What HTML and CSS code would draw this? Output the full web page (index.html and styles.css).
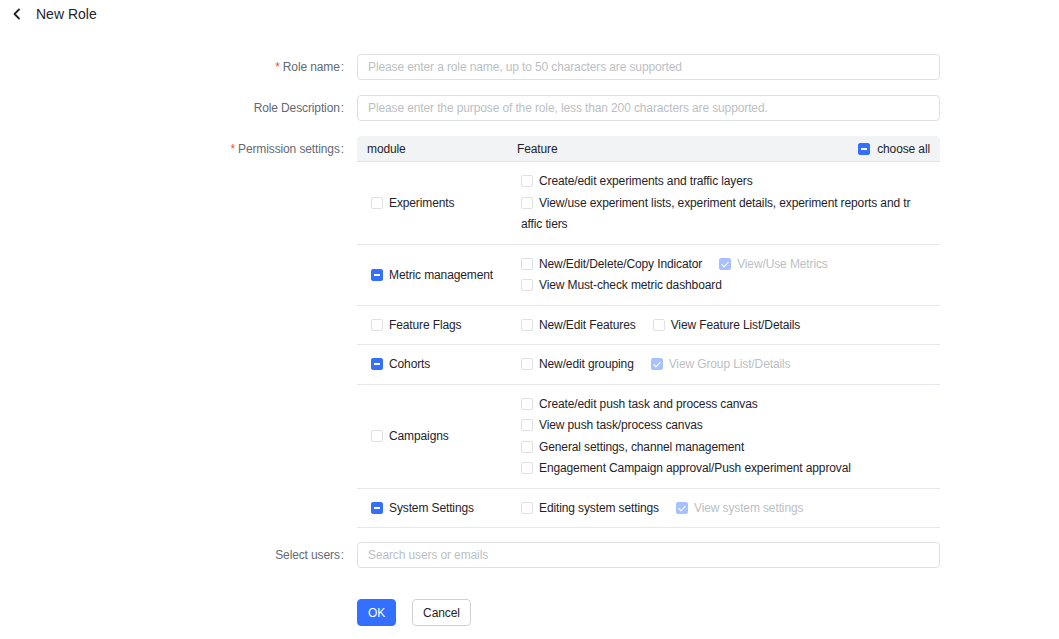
FILE: index.html
```html
<!DOCTYPE html>
<html lang="en">
<head>
<meta charset="utf-8">
<title>New Role</title>
<link rel="stylesheet" href="styles.css">
</head>
<body>
<div class="page">
  <div class="topbar">
    <svg class="back" width="10" height="12" viewBox="0 0 10 12"><polyline points="7,1.5 2.5,6 7,10.5" fill="none" stroke="#1f2329" stroke-width="1.8" stroke-linecap="round" stroke-linejoin="round"/></svg>
    <span class="title">New Role</span>
  </div>

  <div class="form">
    <div class="label"><span class="req">*</span>Role name<span class="colon">:</span></div>
    <div class="input"><span class="ph">Please enter a role name, up to 50 characters are supported</span></div>

    <div class="label">Role Description<span class="colon">:</span></div>
    <div class="input"><span class="ph">Please enter the purpose of the role, less than 200 characters are supported.</span></div>

    <div class="label"><span class="req">*</span>Permission settings<span class="colon">:</span></div>
    <div class="table">
      <div class="thead">
        <div class="th-mod">module</div>
        <div class="th-feat">Feature</div>
        <div class="th-all"><span class="cb ind"></span>choose all</div>
      </div>

      <div class="row">
        <div class="mod"><span class="cb"></span>Experiments</div>
        <div class="feat">
          <div class="line"><span class="opt"><span class="cb"></span>Create/edit experiments and traffic layers</span></div>
          <div class="line"><span class="opt"><span class="cb"></span>View/use experiment lists, experiment details, experiment reports and tr<br>affic tiers</span></div>
        </div>
      </div>

      <div class="row">
        <div class="mod"><span class="cb ind"></span>Metric management</div>
        <div class="feat">
          <div class="line"><span class="opt"><span class="cb"></span>New/Edit/Delete/Copy Indicator</span><span class="opt dis"><span class="cb chk"></span>View/Use Metrics</span></div>
          <div class="line"><span class="opt"><span class="cb"></span>View Must-check metric dashboard</span></div>
        </div>
      </div>

      <div class="row">
        <div class="mod"><span class="cb"></span>Feature Flags</div>
        <div class="feat">
          <div class="line"><span class="opt"><span class="cb"></span>New/Edit Features</span><span class="opt"><span class="cb"></span>View Feature List/Details</span></div>
        </div>
      </div>

      <div class="row">
        <div class="mod"><span class="cb ind"></span>Cohorts</div>
        <div class="feat">
          <div class="line"><span class="opt"><span class="cb"></span>New/edit grouping</span><span class="opt dis"><span class="cb chk"></span>View Group List/Details</span></div>
        </div>
      </div>

      <div class="row">
        <div class="mod"><span class="cb"></span>Campaigns</div>
        <div class="feat">
          <div class="line"><span class="opt"><span class="cb"></span>Create/edit push task and process canvas</span></div>
          <div class="line"><span class="opt"><span class="cb"></span>View push task/process canvas</span></div>
          <div class="line"><span class="opt"><span class="cb"></span>General settings, channel management</span></div>
          <div class="line"><span class="opt"><span class="cb"></span>Engagement Campaign approval/Push experiment approval</span></div>
        </div>
      </div>

      <div class="row">
        <div class="mod"><span class="cb ind"></span>System Settings</div>
        <div class="feat">
          <div class="line"><span class="opt"><span class="cb"></span>Editing system settings</span><span class="opt dis"><span class="cb chk"></span>View system settings</span></div>
        </div>
      </div>
    </div>

    <div class="label users-label">Select users<span class="colon">:</span></div>
    <div class="input users-input"><span class="ph">Search users or emails</span></div>

    <div class="label"></div>
    <div class="actions">
      <button class="btn primary">OK</button>
      <button class="btn">Cancel</button>
    </div>
  </div>
</div>
</body>
</html>
```

FILE: styles.css
```css
* { box-sizing: border-box; }
html, body { margin: 0; padding: 0; background: #fff; }
body {
  font-family: "Liberation Sans", Arial, sans-serif;
  font-size: 12px;
  letter-spacing: -0.12px;
  color: #1f2329;
}
.topbar {
  height: 28px;
  display: flex;
  align-items: center;
  padding-left: 12px;
}
.back { display: block; margin-right: 14px; }
.title { font-size: 14px; color: #1f2329; letter-spacing: 0; }

.form {
  margin-top: 26px;
  display: grid;
  grid-template-columns: 344px 583px;
  column-gap: 13px;
  row-gap: 15px;
}
.label {
  text-align: right;
  line-height: 26px;
  color: #646a73;
  white-space: nowrap;
}
.req { color: #f54a45; margin-right: 3px; }
.colon { margin-left: 1px; }
.input {
  height: 26px;
  border: 1px solid #dee0e3;
  border-radius: 4px;
  padding: 0 10px;
  line-height: 24px;
}
.users-label, .users-input { margin-top: -1px; }
.ph { color: #bbbfc4; }

.table { border-radius: 4px; }
.thead {
  height: 26px;
  background: #f2f3f5;
  display: flex;
  align-items: center;
  border-bottom: 1px solid #e5e6eb;
  border-radius: 4px 4px 0 0;
}
.th-mod { width: 160px; padding-left: 10px; }
.th-feat { flex: 1; }
.th-all { display: flex; align-items: center; padding-right: 10px; }
.th-all .cb { margin-right: 7px; }

.row {
  display: flex;
  border-bottom: 1px solid #e5e6eb;
}
.mod {
  width: 160px;
  flex: none;
  display: flex;
  align-items: center;
  padding-left: 14px;
}
.mod .cb { margin-right: 6px; }
.feat {
  flex: 1;
  padding: 9px 16px 8px 4px;
  line-height: 21.5px;
}
.opt { margin-right: 17px; }
.opt .cb { vertical-align: -2px; margin-right: 6px; }
.opt.dis { color: #bbbfc4; }

.cb {
  display: inline-block;
  width: 12px;
  height: 12px;
  border: 1px solid #dee0e3;
  border-radius: 2px;
  background: #fff;
  position: relative;
  flex: none;
}
.cb.ind { background: #3370ff; border-color: #3370ff; }
.cb.ind::after {
  content: "";
  position: absolute;
  left: 2px; top: 4px;
  width: 6px; height: 2px;
  background: #fff;
}
.cb.chk { background: #a7c1ff; border-color: #a7c1ff; }
.cb.chk::after {
  content: "";
  position: absolute;
  left: 3px; top: 1px;
  width: 3px; height: 6px;
  border: solid #fff;
  border-width: 0 1.5px 1.5px 0;
  transform: rotate(45deg);
}

.actions {
  margin-top: 16px;
  display: flex;
  gap: 16px;
}
.btn {
  height: 27px;
  padding: 0 10px;
  border: 1px solid #d0d3d6;
  border-radius: 4px;
  background: #fff;
  color: #1f2329;
  font-family: "Liberation Sans", Arial, sans-serif;
  font-size: 12px;
  letter-spacing: -0.12px;
}
.btn.primary {
  background: #3370ff;
  border-color: #3370ff;
  color: #fff;
}
```
